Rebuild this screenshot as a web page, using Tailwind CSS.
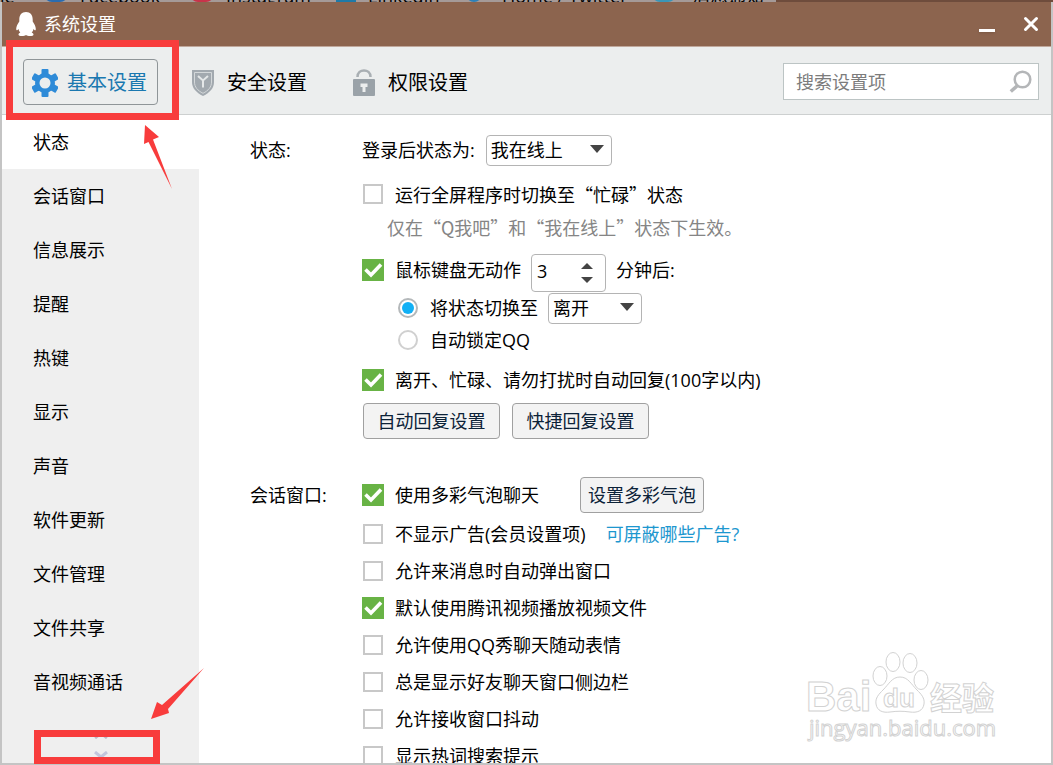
<!DOCTYPE html>
<html lang="zh-CN">
<head>
  <meta charset="UTF-8" />
  <meta name="viewport" content="width=device-width, initial-scale=1.0"/>
  <title>系统设置</title>
  <script src="https://cdn.jsdelivr.net/npm/@tailwindcss/browser@4"></script>
</head>
<body class="relative h-screen overflow-hidden flex flex-col bg-[#c4c4c4] text-black text-[18px] leading-6 font-['Open_Sans','Noto_Sans_CJK_SC',sans-serif]">

  <!-- Bookmarks bar behind the window -->
  <div class="h-0.5 shrink-0 overflow-hidden bg-[#a59a98] flex items-end text-[18px] leading-3 text-black whitespace-nowrap" aria-hidden="true">
    <span class="w-[44px]">le</span>
    <span class="w-6 h-2 rounded-b-full bg-[#2a6cb0] mr-3"></span><span class="w-[110px]">Facebook</span>
    <span class="w-6 h-2 rounded-b-full bg-[#c8334a] mr-3"></span><span class="w-[110px]">Instagram</span>
    <span class="w-5 h-2 bg-[#1e7aa8] mr-3"></span><span class="w-[98px]">LinkedIn</span>
    <span class="w-4 h-2 rounded-b-full bg-[#2c80b8] mr-5"></span><span class="w-[150px]">Home / Twitter</span>
    <span class="w-6 h-2 rounded-b-full bg-[#3a96b8] mr-4"></span><span>消息通知</span>
    <span class="flex-1 h-2 ml-3 bg-[#6e4c3c]"></span>
  </div>

  <div class="flex-1 min-h-0 mx-0.5 mb-0.5 flex flex-col bg-white">
    <!-- Title bar -->
    <header class="h-[45px] shrink-0 bg-[#8c644e] border-b border-[#c0a89c] text-white flex items-center pl-3.5 pr-3">
      <svg class="w-5 h-6 mr-2" viewBox="0 0 20 24" fill="currentColor" aria-hidden="true">
        <path d="M10 0C5.600 0 3.300 3 3.300 7.500v2C1.500 12 .2 14.500.2 17c0 1.600.9 1.800 2.300-.1.200 1.300.8 2.600 1.800 3.600C3 21 2.500 21.700 2.500 22.500c0 1.100 1.400 1.500 3.500 1.500 1.700 0 3-.4 4-1 1 .6 2.300 1 4 1 2.100 0 3.500-.4 3.500-1.500 0-.8-.5-1.500-1.800-2 1-1 1.600-2.300 1.800-3.600 1.400 1.900 2.300 1.700 2.300.1 0-2.500-1.300-5-3.100-7.500v-2C16.700 3 14.400 0 10 0z"/>
      </svg>
      <h1 class="flex-1">系统设置</h1>
      <button aria-label="最小化" class="w-4 h-6 flex items-end pb-1 mr-7"><span class="w-4 h-[3px] bg-white shadow"></span></button>
      <button aria-label="关闭" class="w-4 h-6 flex items-center">
        <svg class="w-4 h-4" viewBox="0 0 16 16" fill="none" stroke="currentColor" stroke-width="3" stroke-linecap="round"><path d="M2.500 2.500l11 11M13.500 2.500l-11 11"/></svg>
      </button>
    </header>

    <!-- Tabs and search -->
    <div class="h-[68px] shrink-0 bg-[#eceeee] border-b border-[#cdd0d0] flex items-center pt-0.5 pl-[21px] pr-3 text-[20px]">
      <nav class="flex flex-1">
        <button class="w-[135px] h-[46px] pt-0.5 px-2 border border-[#8f9598] rounded-sm text-[#1a78b0] flex items-center">
          <svg class="w-[26px] h-7 mr-[9px]" viewBox="0 0 26 28" aria-hidden="true">
            <g fill="#2e8bd8">
              <rect x="9.500" y="0" width="7" height="28" rx="1"/>
              <rect x="9.500" y="0" width="7" height="28" rx="1" transform="rotate(60 13 14)"/>
              <rect x="9.500" y="0" width="7" height="28" rx="1" transform="rotate(120 13 14)"/>
              <circle cx="13" cy="14" r="10"/>
            </g>
            <circle cx="13" cy="14" r="5.500" fill="#eceeee"/>
          </svg>
          基本设置
        </button>
        <button class="h-[46px] pt-0.5 ml-[33px] flex items-center">
          <svg class="w-6 h-7 mr-3" viewBox="0 0 24 28" aria-hidden="true">
            <path d="M1 1h22v12c0 6-4 10.500-11 14C5 23.500 1 19 1 13z" fill="#a2a9af"/>
            <path d="M3.500 3.500h17v9.500c0 5-3 8.500-8.500 11.300C6.500 21.500 3.500 18 3.500 13z" fill="none" stroke="#d4d8da" stroke-width="1"/>
            <path d="M7 7l5 4.500L17 7M12 11.500v7" fill="none" stroke="#e4e7e8" stroke-width="2"/>
          </svg>
          安全设置
        </button>
        <button class="h-[46px] pt-0.5 ml-[45px] flex items-center">
          <svg class="w-6 h-7 mr-3" viewBox="0 0 24 28" aria-hidden="true">
            <path d="M5.500 8C5.500-.8 18.500-.8 18.500 8" fill="none" stroke="#a9afb3" stroke-width="2.500"/>
            <rect x="1" y="10" width="22" height="17" rx="1" fill="#9aa2a8"/>
            <path d="M8.500 14.500h7v3.500h-2v5h-3v-5h-2z" fill="#eceeee"/>
          </svg>
          权限设置
        </button>
      </nav>
      <div class="relative w-64">
        <input type="search" aria-label="搜索设置项" placeholder="搜索设置项" class="w-full h-[37px] pl-3 pr-10 bg-white border border-[#bcc4c4] text-[18px] placeholder:text-[#7c7c7c] outline-none">
        <svg class="absolute right-1.5 top-1.5 w-6 h-6" viewBox="0 0 24 24" fill="none" stroke="#b4b6b8" aria-hidden="true">
          <circle cx="13.500" cy="10.500" r="7.800" stroke-width="2.500"/><path d="M8.500 16.500L1.800 22.500" stroke-width="3.500"/>
        </svg>
      </div>
    </div>

    <div class="flex-1 min-h-0 flex overflow-hidden">
      <!-- Sidebar -->
      <aside class="w-[197px] shrink-0 bg-[#efefef] flex flex-col">
        <nav class="flex flex-col">
          <a href="#" class="h-[54px] pl-[31px] flex items-center bg-white">状态</a>
          <a href="#" class="h-[54px] pl-[31px] flex items-center">会话窗口</a>
          <a href="#" class="h-[54px] pl-[31px] flex items-center">信息展示</a>
          <a href="#" class="h-[54px] pl-[31px] flex items-center">提醒</a>
          <a href="#" class="h-[54px] pl-[31px] flex items-center">热键</a>
          <a href="#" class="h-[54px] pl-[31px] flex items-center">显示</a>
          <a href="#" class="h-[54px] pl-[31px] flex items-center">声音</a>
          <a href="#" class="h-[54px] pl-[31px] flex items-center">软件更新</a>
          <a href="#" class="h-[54px] pl-[31px] flex items-center">文件管理</a>
          <a href="#" class="h-[54px] pl-[31px] flex items-center">文件共享</a>
          <a href="#" class="h-[54px] pl-[31px] flex items-center">音视频通话</a>
        </nav>
        <div class="mt-auto pb-1 flex flex-col items-center gap-3">
          <button aria-label="向上" class="block"><svg class="block w-4 h-2" viewBox="0 0 16 8" fill="none" stroke="#b9b9c6" stroke-width="3"><path d="M2 7l6-5 6 5"/></svg></button>
          <button aria-label="向下" class="block"><svg class="block w-4 h-2" viewBox="0 0 16 8" fill="none" stroke="#c3c6dc" stroke-width="3"><path d="M2 1l6 5 6-5"/></svg></button>
        </div>
      </aside>

      <!-- Settings -->
      <main class="flex-1 pl-[51px] pt-[18px] overflow-hidden">
        <section class="flex">
          <h2 class="w-[112px] h-[34px] shrink-0 flex items-center">状态:</h2>
          <div class="flex-1">
            <div class="h-[34px] flex items-center">
              <label for="loginStatus" class="mr-[11px]">登录后状态为:</label>
              <div class="relative">
                <select id="loginStatus" class="block appearance-none w-[126px] h-[31px] pl-1 bg-white border border-[#b4b4b4] rounded-sm leading-6"><option>我在线上</option><option>离开</option></select>
                <svg class="absolute right-2 top-2.5 w-[14px] h-2 pointer-events-none" viewBox="0 0 14 8" fill="#444"><path d="M0 0h14L7 8z"/></svg>
              </div>
            </div>
            <label class="h-[37px] mt-2 flex items-center">
              <span class="relative w-[22px] h-[22px] mr-[11px] flex items-center justify-center">
                <input type="checkbox" class="peer appearance-none w-5 h-5 bg-white border-2 border-[#c8c8c8] checked:w-[22px] checked:h-[22px] checked:bg-[#68b345] checked:border-0">
                <svg class="hidden peer-checked:block absolute w-[22px] h-[22px] pointer-events-none" viewBox="0 0 22 22" fill="none" stroke="#fff" stroke-width="3.600"><path d="M3.500 10.500l5.500 5.500L19 5.500"/></svg>
              </span>
              <span class="font-['Noto_Sans_CJK_SC',sans-serif]">运行全屏程序时切换至“忙碌”状态</span>
            </label>
            <p class="h-[30px] pl-[25px] flex items-center text-[#858585] font-['Noto_Sans_CJK_SC',sans-serif]">仅在“Q我吧”和“我在线上”状态下生效。</p>
            <div class="mt-3 flex items-start">
              <label class="h-8 flex items-center">
                <span class="relative w-[22px] h-[22px] mr-[11px] flex items-center justify-center">
                  <input type="checkbox" checked class="peer appearance-none w-5 h-5 bg-white border-2 border-[#c8c8c8] checked:w-[22px] checked:h-[22px] checked:bg-[#68b345] checked:border-0">
                  <svg class="hidden peer-checked:block absolute w-[22px] h-[22px] pointer-events-none" viewBox="0 0 22 22" fill="none" stroke="#fff" stroke-width="3.600"><path d="M3.500 10.500l5.500 5.500L19 5.500"/></svg>
                </span>
                鼠标键盘无动作
              </label>
              <div class="ml-2.5 mr-2.5 w-[75px] h-[38px] border border-[#b4b4b4] rounded-sm flex">
                <input type="number" value="3" aria-label="分钟" class="[appearance:textfield] w-[49px] h-8 pl-[5px] outline-none">
                <div class="flex flex-col items-center pt-2 gap-2">
                  <button aria-label="增加"><svg class="block w-3 h-1.5" viewBox="0 0 12 6" fill="#444"><path d="M0 6h12L6 0z"/></svg></button>
                  <button aria-label="减少"><svg class="block w-3 h-1.5" viewBox="0 0 12 6" fill="#444"><path d="M0 0h12L6 6z"/></svg></button>
                </div>
              </div>
              <span class="h-8 flex items-center">分钟后:</span>
            </div>
            <div class="h-8 pl-9 flex items-center">
              <label class="flex items-center">
                <span class="relative w-5 h-5 mr-3 flex items-center justify-center">
                  <input type="radio" name="idle" checked class="peer appearance-none w-5 h-5 rounded-full bg-white border-2 border-[#d0d0d0] checked:border-[#b4b8ba]">
                  <span class="hidden peer-checked:block absolute w-3 h-3 rounded-full bg-[#12b0f5] pointer-events-none"></span>
                </span>
                将状态切换至
              </label>
              <div class="relative ml-2.5">
                <select aria-label="切换状态" class="block appearance-none w-[94px] h-[31px] pl-1 bg-white border border-[#b4b4b4] rounded-sm leading-6"><option>离开</option><option>忙碌</option></select>
                <svg class="absolute right-2 top-2.5 w-[14px] h-2 pointer-events-none" viewBox="0 0 14 8" fill="#444"><path d="M0 0h14L7 8z"/></svg>
              </div>
            </div>
            <label class="h-8 pl-9 flex items-center">
              <span class="relative w-5 h-5 mr-3 flex items-center justify-center">
                <input type="radio" name="idle" class="peer appearance-none w-5 h-5 rounded-full bg-white border-2 border-[#d0d0d0] checked:border-[#b4b8ba]">
                <span class="hidden peer-checked:block absolute w-3 h-3 rounded-full bg-[#12b0f5] pointer-events-none"></span>
              </span>
              自动锁定QQ
            </label>
            <label class="h-[47px] flex items-center">
              <span class="relative w-[22px] h-[22px] mr-[11px] flex items-center justify-center">
                <input type="checkbox" checked class="peer appearance-none w-5 h-5 bg-white border-2 border-[#c8c8c8] checked:w-[22px] checked:h-[22px] checked:bg-[#68b345] checked:border-0">
                <svg class="hidden peer-checked:block absolute w-[22px] h-[22px] pointer-events-none" viewBox="0 0 22 22" fill="none" stroke="#fff" stroke-width="3.600"><path d="M3.500 10.500l5.500 5.500L19 5.500"/></svg>
              </span>
              离开、忙碌、请勿打扰时自动回复(100字以内)
            </label>
            <div class="flex gap-3 pl-px">
              <button class="w-[137px] h-9 bg-[#f3f3f3] border border-[#a0a0a0] rounded-sm text-[#0c2238]">自动回复设置</button>
              <button class="w-[137px] h-9 bg-[#f3f3f3] border border-[#a0a0a0] rounded-sm text-[#0c2238]">快捷回复设置</button>
            </div>
          </div>
        </section>

        <section class="flex mt-[38px]">
          <h2 class="w-[112px] h-9 shrink-0 flex items-center">会话窗口:</h2>
          <div class="flex-1">
            <div class="h-9 flex items-center">
              <label class="flex items-center">
                <span class="relative w-[22px] h-[22px] mr-[11px] flex items-center justify-center">
                  <input type="checkbox" checked class="peer appearance-none w-5 h-5 bg-white border-2 border-[#c8c8c8] checked:w-[22px] checked:h-[22px] checked:bg-[#68b345] checked:border-0">
                  <svg class="hidden peer-checked:block absolute w-[22px] h-[22px] pointer-events-none" viewBox="0 0 22 22" fill="none" stroke="#fff" stroke-width="3.600"><path d="M3.500 10.500l5.500 5.500L19 5.500"/></svg>
                </span>
                使用多彩气泡聊天
              </label>
              <button class="ml-[41px] w-[124px] h-9 bg-[#f3f3f3] border border-[#a0a0a0] rounded-sm text-[#0c2238]">设置多彩气泡</button>
            </div>
            <div class="h-9 mt-[3px] flex items-center">
              <label class="flex items-center">
                <span class="relative w-[22px] h-[22px] mr-[11px] flex items-center justify-center">
                  <input type="checkbox" class="peer appearance-none w-5 h-5 bg-white border-2 border-[#c8c8c8] checked:w-[22px] checked:h-[22px] checked:bg-[#68b345] checked:border-0">
                  <svg class="hidden peer-checked:block absolute w-[22px] h-[22px] pointer-events-none" viewBox="0 0 22 22" fill="none" stroke="#fff" stroke-width="3.600"><path d="M3.500 10.500l5.500 5.500L19 5.500"/></svg>
                </span>
                不显示广告(会员设置项)
              </label>
              <a href="#" class="ml-5 text-[#1d97cf]">可屏蔽哪些广告?</a>
            </div>
            <label class="h-[37px] flex items-center">
              <span class="relative w-[22px] h-[22px] mr-[11px] flex items-center justify-center">
                <input type="checkbox" class="peer appearance-none w-5 h-5 bg-white border-2 border-[#c8c8c8] checked:w-[22px] checked:h-[22px] checked:bg-[#68b345] checked:border-0">
                <svg class="hidden peer-checked:block absolute w-[22px] h-[22px] pointer-events-none" viewBox="0 0 22 22" fill="none" stroke="#fff" stroke-width="3.600"><path d="M3.500 10.500l5.500 5.500L19 5.500"/></svg>
              </span>
              允许来消息时自动弹出窗口
            </label>
            <label class="h-[37px] flex items-center">
              <span class="relative w-[22px] h-[22px] mr-[11px] flex items-center justify-center">
                <input type="checkbox" checked class="peer appearance-none w-5 h-5 bg-white border-2 border-[#c8c8c8] checked:w-[22px] checked:h-[22px] checked:bg-[#68b345] checked:border-0">
                <svg class="hidden peer-checked:block absolute w-[22px] h-[22px] pointer-events-none" viewBox="0 0 22 22" fill="none" stroke="#fff" stroke-width="3.600"><path d="M3.500 10.500l5.500 5.500L19 5.500"/></svg>
              </span>
              默认使用腾讯视频播放视频文件
            </label>
            <label class="h-[37px] flex items-center">
              <span class="relative w-[22px] h-[22px] mr-[11px] flex items-center justify-center">
                <input type="checkbox" class="peer appearance-none w-5 h-5 bg-white border-2 border-[#c8c8c8] checked:w-[22px] checked:h-[22px] checked:bg-[#68b345] checked:border-0">
                <svg class="hidden peer-checked:block absolute w-[22px] h-[22px] pointer-events-none" viewBox="0 0 22 22" fill="none" stroke="#fff" stroke-width="3.600"><path d="M3.500 10.500l5.500 5.500L19 5.500"/></svg>
              </span>
              允许使用QQ秀聊天随动表情
            </label>
            <label class="h-[37px] flex items-center">
              <span class="relative w-[22px] h-[22px] mr-[11px] flex items-center justify-center">
                <input type="checkbox" class="peer appearance-none w-5 h-5 bg-white border-2 border-[#c8c8c8] checked:w-[22px] checked:h-[22px] checked:bg-[#68b345] checked:border-0">
                <svg class="hidden peer-checked:block absolute w-[22px] h-[22px] pointer-events-none" viewBox="0 0 22 22" fill="none" stroke="#fff" stroke-width="3.600"><path d="M3.500 10.500l5.500 5.500L19 5.500"/></svg>
              </span>
              总是显示好友聊天窗口侧边栏
            </label>
            <label class="h-[37px] flex items-center">
              <span class="relative w-[22px] h-[22px] mr-[11px] flex items-center justify-center">
                <input type="checkbox" class="peer appearance-none w-5 h-5 bg-white border-2 border-[#c8c8c8] checked:w-[22px] checked:h-[22px] checked:bg-[#68b345] checked:border-0">
                <svg class="hidden peer-checked:block absolute w-[22px] h-[22px] pointer-events-none" viewBox="0 0 22 22" fill="none" stroke="#fff" stroke-width="3.600"><path d="M3.500 10.500l5.500 5.500L19 5.500"/></svg>
              </span>
              允许接收窗口抖动
            </label>
            <label class="h-[37px] flex items-center">
              <span class="relative w-[22px] h-[22px] mr-[11px] flex items-center justify-center">
                <input type="checkbox" class="peer appearance-none w-5 h-5 bg-white border-2 border-[#c8c8c8] checked:w-[22px] checked:h-[22px] checked:bg-[#68b345] checked:border-0">
                <svg class="hidden peer-checked:block absolute w-[22px] h-[22px] pointer-events-none" viewBox="0 0 22 22" fill="none" stroke="#fff" stroke-width="3.600"><path d="M3.500 10.500l5.500 5.500L19 5.500"/></svg>
              </span>
              显示热词搜索提示
            </label>
          </div>
        </section>
      </main>
    </div>
  </div>

  <!-- Watermark -->
  <svg class="absolute right-[50px] bottom-[15px] w-[200px] h-[100px] pointer-events-none" viewBox="0 0 200 100" fill="#fff" stroke="#d2d2d2" stroke-width="1" font-family="Liberation Sans, sans-serif" font-weight="700">
    <text x="3" y="61" font-size="42">Bai</text>
    <ellipse cx="77" cy="26" rx="7" ry="9.500"/>
    <ellipse cx="90" cy="12" rx="7" ry="9.500"/>
    <ellipse cx="107" cy="13" rx="7" ry="9.500"/>
    <ellipse cx="118" cy="30" rx="7" ry="9.500"/>
    <path d="M97 27c-8 0-11 7-17 13-4 4-8 8-7 14 1 7 7 9 14 8 7-1 13-1 20 0 7 1 13-1 14-8 1-6-3-10-7-14-6-6-9-13-17-13z"/>
    <text x="80" y="57" font-size="26">du</text>
    <text x="127" y="60" font-size="32" font-family="Noto Sans CJK SC, sans-serif">经验</text>
    <text x="6" y="86" font-size="22" font-family="Open Sans, sans-serif" font-weight="400">jingyan.baidu.com</text>
  </svg>

  <!-- Red marks -->
  <div class="absolute left-1.5 top-10 w-[173px] h-20 border-[7px] border-[#f83c3c] pointer-events-none"></div>
  <svg class="absolute left-[143px] top-[125px] w-[30px] h-16 pointer-events-none" viewBox="0 0 30 64" fill="#f83c3c"><path d="M2 0l14 12-6 2.500L29 64 5.500 17 1 19z"/></svg>
  <div class="absolute left-[34px] bottom-px w-[126px] h-[34px] border-[7px] border-[#f83c3c] pointer-events-none"></div>
  <svg class="absolute left-[151px] bottom-[46px] w-[54px] h-[52px] pointer-events-none" viewBox="0 0 54 52" fill="#f83c3c"><path d="M53 1L17 42l1 4L0 52l6-17 5 3z"/></svg>

</body>
</html>
